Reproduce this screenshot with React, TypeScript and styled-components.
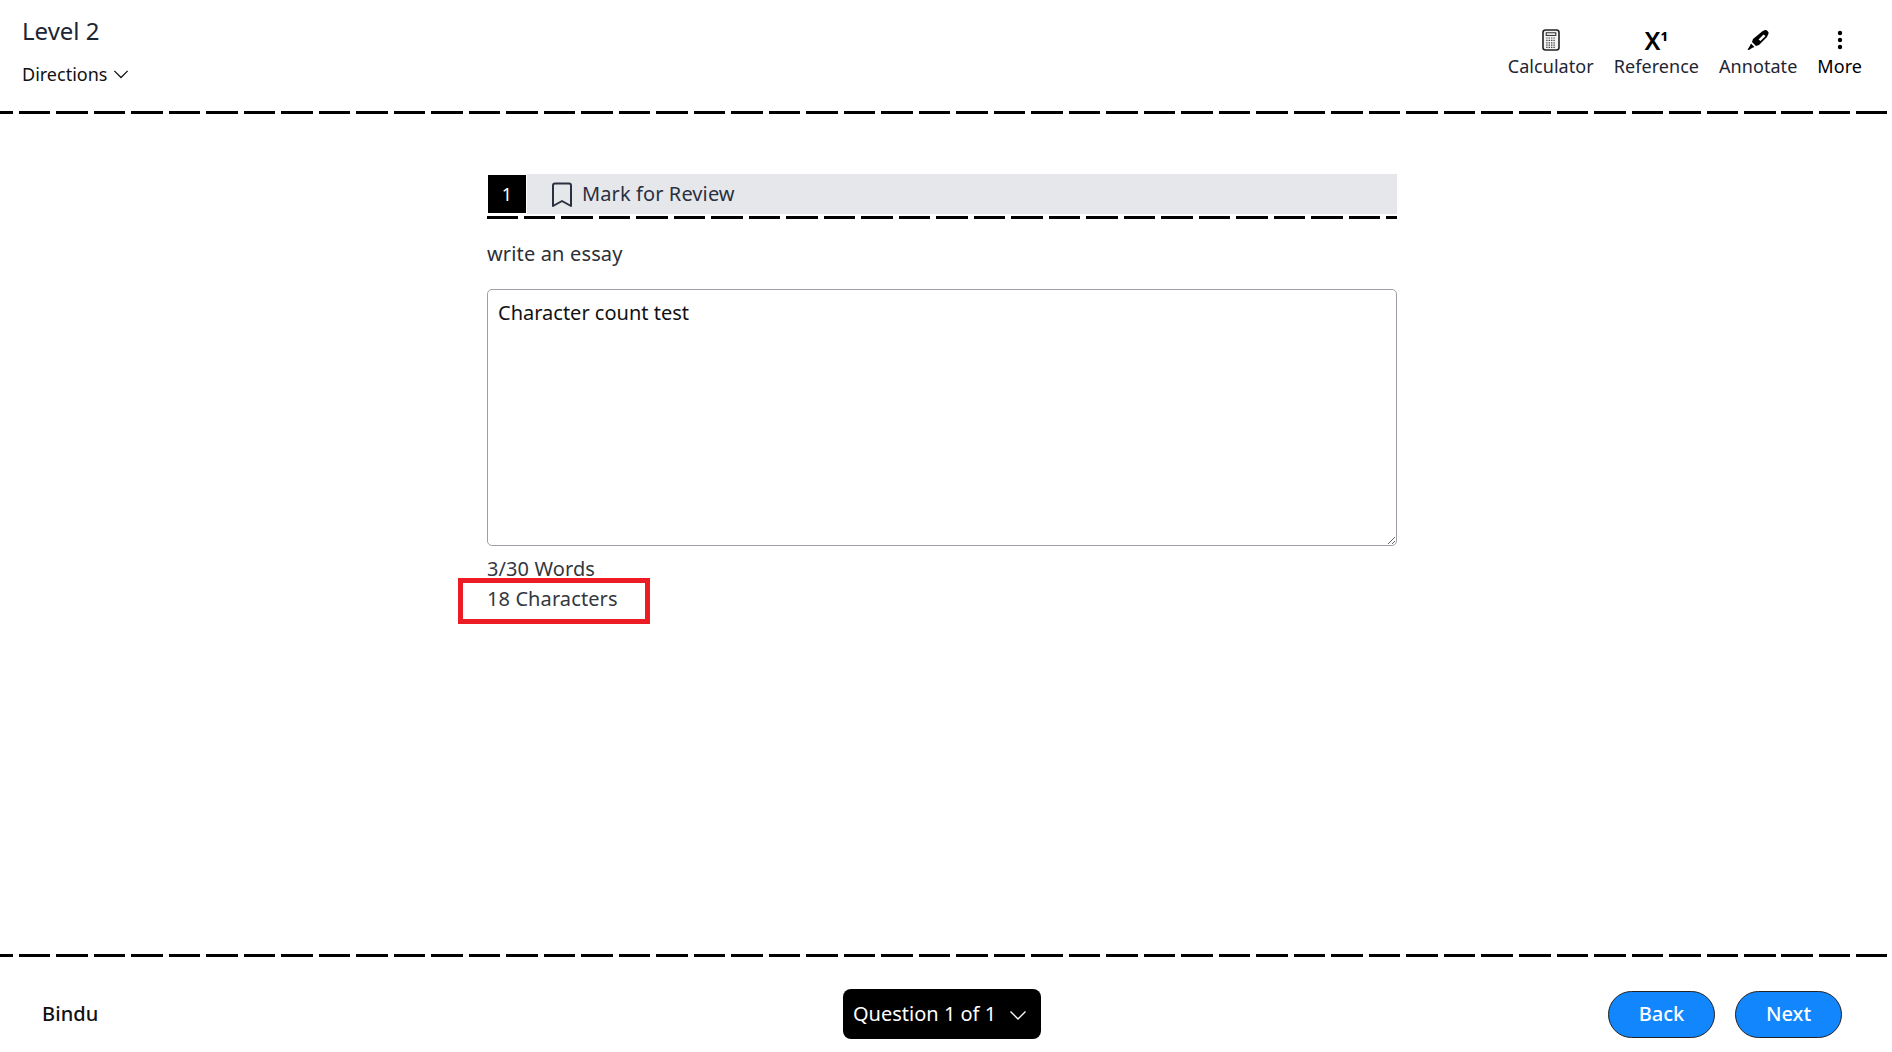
import React from 'react';
import styled, { createGlobalStyle } from 'styled-components';

const GlobalStyle = createGlobalStyle`
  html, body {
    margin: 0;
    padding: 0;
    background: #fff;
  }
  body {
    font-family: "Noto Sans", "Open Sans", sans-serif;
    color: #1e1e1e;
    overflow: hidden;
  }
`;

const Page = styled.div`
  display: flex;
  flex-direction: column;
  width: 1887px;
  height: 1052px;
`;

// dash 31.5, gap 6, $start is where the first dash begins
const DashedRule = styled.div<{ $start?: number }>`
  flex: none;
  height: 3px;
  background-image: ${({ $start = -18.5 }) => `repeating-linear-gradient(
    90deg,
    #000 ${$start}px,
    #000 ${$start + 31.5}px,
    transparent ${$start + 31.5}px,
    transparent ${$start + 37.5}px
  )`};
`;

const QuestionRule = styled(DashedRule)`
  margin-top: 2px;
`;

/* ---------- header ---------- */
const Header = styled.header`
  flex: none;
  height: 111px;
  box-sizing: border-box;
  padding: 0 22px;
  display: flex;
  justify-content: space-between;
`;

const HeaderLeft = styled.div`
  display: flex;
  flex-direction: column;
  padding-top: 13px;
`;

const Title = styled.h1`
  margin: 0;
  font-size: 24px;
  font-weight: 400;
  line-height: 36px;
  color: #1e2533;
`;

const Directions = styled.button`
  display: flex;
  align-items: center;
  gap: 6px;
  margin-top: 12px;
  padding: 0;
  border: 0;
  background: none;
  font: inherit;
  font-size: 18px;
  line-height: 26px;
  color: #111;
`;

const Tools = styled.nav`
  display: flex;
  gap: 20px;
  padding: 27px 3px 0 0;
`;

const Tool = styled.button<{ $strong?: boolean }>`
  display: flex;
  flex-direction: column;
  align-items: center;
  height: 54px;
  padding: 0;
  border: 0;
  background: none;
  font: inherit;
  font-size: 18px;
  line-height: 26px;
  letter-spacing: 0.05px;
  color: ${(p) => (p.$strong ? '#000' : '#1e2533')};
`;

const ToolIcon = styled.span`
  display: flex;
  align-items: center;
  justify-content: center;
  height: 26px;
  color: #000;
`;

const RefGlyph = styled.span`
  font-size: 25px;
  font-weight: 600;
  line-height: 26px;
  color: #000;
  sup {
    font-size: 13px;
    font-weight: 800;
    line-height: 0;
    vertical-align: 9px;
  }
`;

/* ---------- question ---------- */
const Main = styled.main`
  flex: 1;
  display: flex;
  justify-content: center;
  padding: 60px 3px 0 0;
`;

const Question = styled.section`
  width: 910px;
`;

const QuestionBar = styled.div`
  display: flex;
  align-items: center;
  gap: 1px;
  height: 40px;
  background: linear-gradient(90deg, #fff 40px, #e6e7ea 40px);
`;

const Number = styled.div`
  width: 38px;
  height: 38px;
  margin-left: 1px;
  display: flex;
  align-items: center;
  justify-content: center;
  background: #000;
  color: #fff;
  font-size: 18px;
`;

const MarkReview = styled.button`
  display: flex;
  align-items: center;
  gap: 9px;
  margin-left: 24px;
  padding: 0 0 2px;
  border: 0;
  background: none;
  font: inherit;
  font-size: 20px;
  letter-spacing: 0.1px;
  color: #2a3040;

  svg {
    margin-top: 4px;
  }
`;

const Prompt = styled.p`
  margin: 21px 0;
  font-size: 20px;
  line-height: 28px;
  letter-spacing: 0.15px;
  color: #2c2f36;
`;

const Essay = styled.textarea`
  display: block;
  box-sizing: border-box;
  width: 910px;
  height: 257px;
  padding: 9px 10px;
  border: 1px solid #9da0a8;
  border-radius: 5px;
  outline: none;
  font-family: inherit;
  font-size: 20px;
  line-height: 28px;
  color: #111;
`;

const Counts = styled.div`
  margin-top: 8px;
  font-size: 20px;
  line-height: 30px;
  letter-spacing: 0.1px;
  color: #33373e;
`;

const Highlighted = styled.div`
  position: relative;
`;

const Callout = styled.div`
  position: absolute;
  left: -29px;
  top: -6px;
  width: 192px;
  height: 46px;
  box-sizing: border-box;
  border: 5px solid #ec1c24;
`;

/* ---------- footer ---------- */
const Footer = styled.footer`
  flex: none;
  height: 95px;
  box-sizing: border-box;
  padding: 19px 45px 0 42px;
  display: grid;
  grid-template-columns: 1fr auto 1fr;
  align-items: center;
`;

const UserName = styled.div`
  padding-bottom: 2px;
  font-size: 20px;
  font-weight: 500;
  letter-spacing: 0.1px;
  color: #111;
`;

const QuestionPicker = styled.button`
  display: flex;
  align-items: center;
  gap: 13px;
  height: 50px;
  width: 198px;
  box-sizing: border-box;
  padding: 0 10px 2px;
  border: 0;
  border-radius: 8px;
  background: #000;
  color: #fff;
  font: inherit;
  font-size: 20px;
  white-space: nowrap;

  svg {
    margin-top: 4px;
  }
`;

const NavButtons = styled.div`
  display: flex;
  justify-content: flex-end;
  gap: 20px;
`;

const NavButton = styled.button`
  width: 107px;
  height: 47px;
  padding: 0 0 2px;
  border: 1px solid #222;
  border-radius: 24px;
  background: #1186fd;
  color: #fff;
  font: inherit;
  font-size: 20px;
  font-weight: 500;
`;

const Chevron = ({ size = 18 }: { size?: number }) => (
  <svg width={size} height={size} viewBox="0 0 18 18" fill="none" stroke="currentColor" strokeWidth="1.4">
    <path d="M1.5 5.5 L9 13 L16.5 5.5" />
  </svg>
);

const CalculatorIcon = () => (
  <svg width="18" height="22" viewBox="0 0 18 22">
    <rect x="1" y="1" width="16" height="20" rx="2.5" fill="#f4f4f4" stroke="#222" strokeWidth="1.6" />
    <rect x="4.2" y="3.8" width="9.6" height="2.6" fill="#fff" stroke="#222" strokeWidth="1" />
    <path d="M4.2 9h9.6M4.2 11.4h9.6M4.2 13.8h9.6M4.2 16.2h9.6M4.2 18.4h9.6" stroke="#444" strokeWidth="1.2" strokeDasharray="1.4 1" />
  </svg>
);

const HighlighterIcon = () => (
  <svg width="22" height="22" viewBox="0 0 22 22" fill="#000">
    <path
      fillRule="evenodd"
      d="M15.4 2.2 18 1c1-.3 1.6 0 2.2.7l.9 1.1c.6.8.7 1.5.2 2.3L20 8l-8 8-3 1-4-4 1-3zM11.5 10.5l5-5 2 1.5-5 5z"
    />
    <path d="M4 14.5 7.5 18 5 19l-3 2-1.5-.5 2-3z" />
  </svg>
);

const MoreIcon = () => (
  <svg width="6" height="22" viewBox="0 0 6 22" fill="#000">
    <circle cx="3" cy="4" r="2.2" />
    <circle cx="3" cy="11" r="2.2" />
    <circle cx="3" cy="18" r="2.2" />
  </svg>
);

const BookmarkIcon = () => (
  <svg width="22" height="26" viewBox="0 0 22 26" fill="none" stroke="#2a3040" strokeWidth="2" strokeLinejoin="round">
    <path d="M2 3.5C2 2.4 2.9 1.5 4 1.5h14c1.1 0 2 .9 2 2V24l-9-5-9 5z" />
  </svg>
);

export default function App() {
  return (
    <Page>
      <GlobalStyle />
      <Header>
        <HeaderLeft>
          <Title>Level 2</Title>
          <Directions>
            Directions <Chevron size={16} />
          </Directions>
        </HeaderLeft>
        <Tools>
          <Tool>
            <ToolIcon>
              <CalculatorIcon />
            </ToolIcon>
            Calculator
          </Tool>
          <Tool>
            <ToolIcon>
              <RefGlyph>
                X<sup>1</sup>
              </RefGlyph>
            </ToolIcon>
            Reference
          </Tool>
          <Tool>
            <ToolIcon>
              <HighlighterIcon />
            </ToolIcon>
            Annotate
          </Tool>
          <Tool $strong>
            <ToolIcon>
              <MoreIcon />
            </ToolIcon>
            More
          </Tool>
        </Tools>
      </Header>
      <DashedRule />

      <Main>
        <Question>
          <QuestionBar>
            <Number>1</Number>
            <MarkReview>
              <BookmarkIcon />
              Mark for Review
            </MarkReview>
          </QuestionBar>
          <QuestionRule $start={-0.5} />
          <Prompt>write an essay</Prompt>
          <Essay defaultValue="Character count test" />
          <Counts>
            3/30 Words
            <Highlighted>
              18 Characters
              <Callout />
            </Highlighted>
          </Counts>
        </Question>
      </Main>

      <DashedRule />
      <Footer>
        <UserName>Bindu</UserName>
        <QuestionPicker>
          Question 1 of 1 <Chevron size={18} />
        </QuestionPicker>
        <NavButtons>
          <NavButton>Back</NavButton>
          <NavButton>Next</NavButton>
        </NavButtons>
      </Footer>
    </Page>
  );
}
